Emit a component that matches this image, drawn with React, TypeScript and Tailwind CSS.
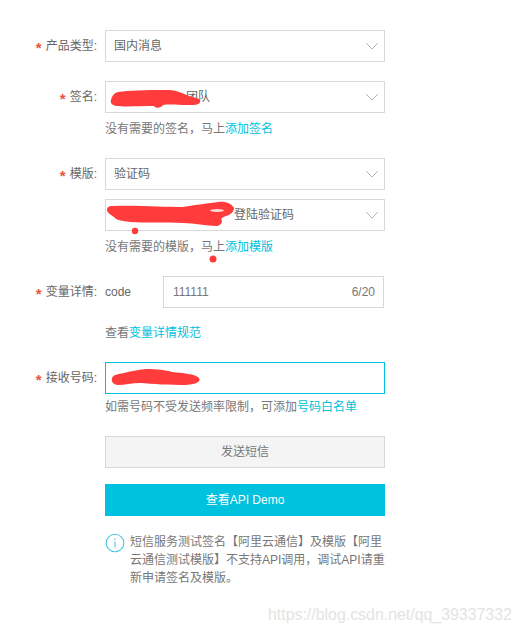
import React from "react";

const FONT = "font-['Liberation_Sans','Noto_Sans_CJK_SC',sans-serif]";

const Chevron = () => (
    <svg width="14" height="8" viewBox="0 0 14 8" fill="none" className="shrink-0">
        <path d="M1 1 L7 7 L13 1" stroke="#b4b4b4" strokeWidth="1" />
    </svg>
);

const Label = ({ text }: { text?: string }) => (
    <div className="w-[97px] mr-2 shrink-0 flex justify-end items-center text-[#666]">
        {text && <span className="text-[#e8543b] mr-[4px] text-[15px] font-bold pt-[3px]">*</span>}
        {text && <span>{text}:</span>}
    </div>
);

const SelectBox = ({ children }: { children: React.ReactNode }) => (
    <div className="w-[280px] h-8 border border-[#d7d8d9] flex items-center justify-between pl-2 pr-[5px] text-[#666] bg-white">
        <span>{children}</span>
        <Chevron />
    </div>
);

const Hint = ({ text, link, className }: { text: string; link: string; className: string }) => (
    <div className={`ml-[105px] h-[18px] leading-[18px] text-[#777] ${className}`}>
        {text}
        <span className="text-[#00c1de]">{link}</span>
    </div>
);

const Scribbles = () => (
    <svg width="521" height="633" viewBox="0 0 521 633" fill="#ff3b3b" className="absolute inset-0 pointer-events-none">
        <path d="M111 100 C112 96 114 93 118 92 C135 90 155 90 170 90 C180 91 186 95 192 97 C197 98 201 99 200 102 C199 105 195 105 188 105 C178 105 170 104 163 105 C161 108 156 109 154 106 C140 106 125 107 116 106 C112 105 110 103 111 100 Z" />
        <path d="M107 209 C108 206 110 206 113 206 C135 205 165 207 183 207 C195 205 210 203 218 202 C226 201 232 204 234 208 C234 212 230 215 226 216 C223 217 222 218 221 219 C223 221 222 225 217 226 C205 226 195 223 183 223 C165 222 145 223 130 222 C122 221 116 220 114 217 C111 215 106 212 107 209 Z" />
        <ellipse cx="217" cy="210.5" rx="7" ry="1.5" fill="#ffdcdc" />
        <path d="M112 378 C113 375 118 374 124 373 C130 371 138 370 146 369 C156 369 166 370 172 372 C182 373 196 374 199 378 C201 382 196 384 186 385 C170 385 152 384 140 383 C132 383 124 385 118 385 C113 385 111 381 112 378 Z" />
        <circle cx="135" cy="231" r="3.2" />
        <circle cx="213" cy="259" r="3.5" />
    </svg>
);

export default function App() {
    return (
        <div className={`relative w-[521px] h-[633px] bg-white overflow-hidden pt-[30px] text-xs ${FONT}`}>
            <div className="flex">
                <Label text="产品类型" />
                <SelectBox>国内消息</SelectBox>
            </div>

            <div className="flex mt-[19px]">
                <Label text="签名" />
                <SelectBox><span className="ml-[72px]">团队</span></SelectBox>
            </div>
            <Hint text="没有需要的签名，马上" link="添加签名" className="mt-[7px]" />

            <div className="flex mt-5">
                <Label text="模版" />
                <SelectBox>验证码</SelectBox>
            </div>
            <div className="flex mt-[9px]">
                <Label />
                <SelectBox><span className="ml-[120px]">登陆验证码</span></SelectBox>
            </div>
            <Hint text="没有需要的模版，马上" link="添加模版" className="mt-[7px]" />

            <div className="flex mt-5">
                <Label text="变量详情" />
                <div className="w-[58px] flex items-center text-[#666]">code</div>
                <div className="w-[221px] h-8 border border-[#d7d8d9] flex items-center justify-between pl-[9px] pr-2 text-[#777]">
                    <span>111111</span>
                    <span>6/20</span>
                </div>
            </div>
            <Hint text="查看" link="变量详情规范" className="mt-4" />

            <div className="flex mt-5">
                <Label text="接收号码" />
                <div className="w-[280px] h-8 border border-[#00c1de]" />
            </div>
            <Hint text="如需号码不受发送频率限制，可添加" link="号码白名单" className="mt-1" />

            <div className="ml-[105px] w-[280px] mt-5 flex flex-col gap-4">
                <button className="h-8 border border-[#d7d8d9] bg-[#f4f4f4] text-[#777]">发送短信</button>
                <button className="h-8 bg-[#00c1de] text-white">查看API Demo</button>
                <div className="flex">
                    <svg width="20" height="20" viewBox="0 0 20 20" fill="none" className="shrink-0 mt-[1px] mr-[5px]">
                        <circle cx="10" cy="10" r="8.8" stroke="#4fc6e6" strokeWidth="1.1" />
                        <path d="M10 8.5 V14.5" stroke="#4fc6e6" strokeWidth="1.1" />
                        <circle cx="10" cy="6" r="0.8" fill="#4fc6e6" />
                    </svg>
                    <p className="mt-[1px] leading-[18px] text-[#777]">
                        短信服务测试签名【阿里云通信】及模版【阿里云通信测试模版】不支持API调用，调试API请重新申请签名及模版。
                    </p>
                </div>
            </div>

            <Scribbles />
            <div className="absolute left-[268px] top-[603px] text-[15.9px] leading-6 text-[#e4e4e4] whitespace-nowrap">
                https://blog.csdn.net/qq_39337332
            </div>
        </div>
    );
}
